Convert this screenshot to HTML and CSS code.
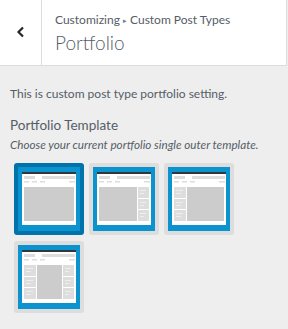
FILE: index.html
```html
<!DOCTYPE html>
<html lang="en">
<head>
  <meta charset="UTF-8" />
  <title>Portfolio</title>
  <link rel="stylesheet" href="styles.css">
</head>
<body>
  <div class="panel-header">
    <button class="back" aria-label="Back">
      <svg width="10" height="12" viewBox="0 0 10 12"><path d="M7 1.5 L2.5 6 L7 10.5" fill="none" stroke="#23282d" stroke-width="2.2"/></svg>
    </button>
    <div class="panel-title">
      <span class="crumb">Customizing <span class="sep">&#9656;</span> Custom Post Types</span>
      <h2>Portfolio</h2>
    </div>
  </div>

  <div class="panel-body">
    <p class="intro">This is custom post type portfolio setting.</p>
    <h3 class="control-title">Portfolio Template</h3>
    <p class="control-desc">Choose your current portfolio single outer template.</p>

    <div class="tpl-list">
      <!-- full width -->
      <div class="tpl selected">
        <svg width="62" height="64" viewBox="0 0 62 64">
          <rect width="62" height="64" fill="#0a93cf"/>
          <g transform="translate(4 5)">
            <rect width="54" height="53" fill="#fff"/>
            <rect width="54" height="2" fill="#32373c"/>
            <rect x="2" y="4" width="11" height="3" fill="#ddd"/>
            <rect x="20" y="4" width="33" height="3" fill="#ddd"/>
            <rect x="2" y="9" width="5" height="1.5" fill="#ddd"/>
            <rect x="10" y="9" width="5" height="1.5" fill="#ddd"/>
            <rect x="18" y="9" width="5" height="1.5" fill="#ddd"/>
            <rect x="47" y="9" width="6" height="1.5" fill="#ddd"/>
            <rect x="2" y="15" width="50" height="34" fill="#ccc"/>
          </g>
        </svg>
      </div>
      <!-- right sidebar -->
      <div class="tpl">
        <svg width="62" height="64" viewBox="0 0 62 64">
          <rect width="62" height="64" fill="#0a93cf"/>
          <g transform="translate(4 5)">
            <rect width="54" height="53" fill="#fff"/>
            <rect width="54" height="2" fill="#32373c"/>
            <rect x="2" y="4" width="11" height="3" fill="#ddd"/>
            <rect x="20" y="4" width="33" height="3" fill="#ddd"/>
            <rect x="2" y="9" width="5" height="1.5" fill="#ddd"/>
            <rect x="10" y="9" width="5" height="1.5" fill="#ddd"/>
            <rect x="18" y="9" width="5" height="1.5" fill="#ddd"/>
            <rect x="47" y="9" width="6" height="1.5" fill="#ddd"/>
            <rect x="2" y="15" width="38" height="34" fill="#ccc"/>
            <g transform="translate(41 15)">
              <rect width="11" height="11" fill="#ddd"/>
              <rect y="12" width="11" height="10" fill="#ddd"/>
              <rect y="23" width="11" height="11" fill="#ddd"/>
              <rect x="2" y="3" width="6" height="1" fill="#eee"/><rect x="2" y="6" width="4" height="1" fill="#eee"/>
              <rect x="2" y="15" width="6" height="1" fill="#eee"/><rect x="2" y="18" width="4" height="1" fill="#eee"/>
              <rect x="2" y="26" width="6" height="1" fill="#eee"/><rect x="2" y="29" width="4" height="1" fill="#eee"/>
            </g>
          </g>
        </svg>
      </div>
      <!-- left sidebar -->
      <div class="tpl">
        <svg width="62" height="64" viewBox="0 0 62 64">
          <rect width="62" height="64" fill="#0a93cf"/>
          <g transform="translate(4 5)">
            <rect width="54" height="53" fill="#fff"/>
            <rect width="54" height="2" fill="#32373c"/>
            <rect x="2" y="4" width="11" height="3" fill="#ddd"/>
            <rect x="20" y="4" width="33" height="3" fill="#ddd"/>
            <rect x="2" y="9" width="5" height="1.5" fill="#ddd"/>
            <rect x="10" y="9" width="5" height="1.5" fill="#ddd"/>
            <rect x="18" y="9" width="5" height="1.5" fill="#ddd"/>
            <rect x="47" y="9" width="6" height="1.5" fill="#ddd"/>
            <g transform="translate(2 15)">
              <rect width="12" height="11" fill="#ddd"/>
              <rect y="12" width="12" height="10" fill="#ddd"/>
              <rect y="23" width="12" height="11" fill="#ddd"/>
              <rect x="2" y="3" width="7" height="1" fill="#eee"/><rect x="2" y="6" width="5" height="1" fill="#eee"/>
              <rect x="2" y="15" width="7" height="1" fill="#eee"/><rect x="2" y="18" width="5" height="1" fill="#eee"/>
              <rect x="2" y="26" width="7" height="1" fill="#eee"/><rect x="2" y="29" width="5" height="1" fill="#eee"/>
            </g>
            <rect x="15" y="15" width="37" height="34" fill="#ccc"/>
          </g>
        </svg>
      </div>
      <!-- both sidebars -->
      <div class="tpl">
        <svg width="62" height="64" viewBox="0 0 62 64">
          <rect width="62" height="64" fill="#0a93cf"/>
          <g transform="translate(4 5)">
            <rect width="54" height="53" fill="#fff"/>
            <rect width="54" height="2" fill="#32373c"/>
            <rect x="2" y="4" width="11" height="3" fill="#ddd"/>
            <rect x="20" y="4" width="33" height="3" fill="#ddd"/>
            <rect x="2" y="9" width="5" height="1.5" fill="#ddd"/>
            <rect x="10" y="9" width="5" height="1.5" fill="#ddd"/>
            <rect x="18" y="9" width="5" height="1.5" fill="#ddd"/>
            <rect x="47" y="9" width="6" height="1.5" fill="#ddd"/>
            <g transform="translate(2 15)">
              <rect width="12" height="11" fill="#ddd"/>
              <rect y="12" width="12" height="10" fill="#ddd"/>
              <rect y="23" width="12" height="11" fill="#ddd"/>
              <rect x="2" y="3" width="7" height="1" fill="#eee"/><rect x="2" y="6" width="5" height="1" fill="#eee"/>
              <rect x="2" y="15" width="7" height="1" fill="#eee"/><rect x="2" y="18" width="5" height="1" fill="#eee"/>
              <rect x="2" y="26" width="7" height="1" fill="#eee"/><rect x="2" y="29" width="5" height="1" fill="#eee"/>
            </g>
            <rect x="15" y="15" width="25" height="34" fill="#ccc"/>
            <g transform="translate(41 15)">
              <rect width="11" height="11" fill="#ddd"/>
              <rect y="12" width="11" height="10" fill="#ddd"/>
              <rect y="23" width="11" height="11" fill="#ddd"/>
              <rect x="2" y="3" width="6" height="1" fill="#eee"/><rect x="2" y="6" width="4" height="1" fill="#eee"/>
              <rect x="2" y="15" width="6" height="1" fill="#eee"/><rect x="2" y="18" width="4" height="1" fill="#eee"/>
              <rect x="2" y="26" width="6" height="1" fill="#eee"/><rect x="2" y="29" width="4" height="1" fill="#eee"/>
            </g>
          </g>
        </svg>
      </div>
    </div>
  </div>
</body>
</html>
```

FILE: styles.css
```css
* {
  box-sizing: border-box;
}

body {
  margin: 0;
  background: #eee;
  font-family: Lato, 'Noto Sans', sans-serif;
  color: #555d66;
}

.panel-header {
  display: flex;
  height: 66px;
  background: #fff;
  border-bottom: 1px solid #ddd;
  border-right: 1px solid #ddd;
  width: 287px;
}

.back {
  width: 42px;
  border: 0;
  border-right: 1px solid #ddd;
  background: #fff;
  padding: 0 0 2px 0;
  display: flex;
  align-items: center;
  justify-content: center;
}

.panel-title {
  padding: 12px 0 0 13px;
  display: flex;
  flex-direction: column;
}

.crumb {
  font-size: 12px;
  line-height: 16px;
  color: #555d66;
}

.sep {
  font-size: 7px;
  vertical-align: 1px;
  color: #72777c;
}

.panel-title h2 {
  margin: 3px 0 0;
  font-size: 19px;
  line-height: 24px;
  font-weight: 300;
  color: #555d66;
}

.panel-body {
  padding: 19px 10px 10px 10px;
}

.intro {
  margin: 0 0 12px;
  font-size: 12px;
  line-height: 18px;
}

.control-title {
  margin: 0;
  font-size: 13.5px;
  line-height: 20px;
  font-weight: 400;
}

.control-desc {
  margin: 0 0 10px;
  font-size: 11.7px;
  line-height: 18px;
  font-style: italic;
  white-space: nowrap;
}

.tpl-list {
  display: flex;
  flex-wrap: wrap;
  gap: 6px 5px;
  padding-left: 4px;
}

.tpl {
  width: 70px;
  height: 72px;
  padding: 4px;
  background: #ddd;
  border-radius: 3px;
  line-height: 0;
}

.tpl.selected {
  background: #0073aa;
}
```
